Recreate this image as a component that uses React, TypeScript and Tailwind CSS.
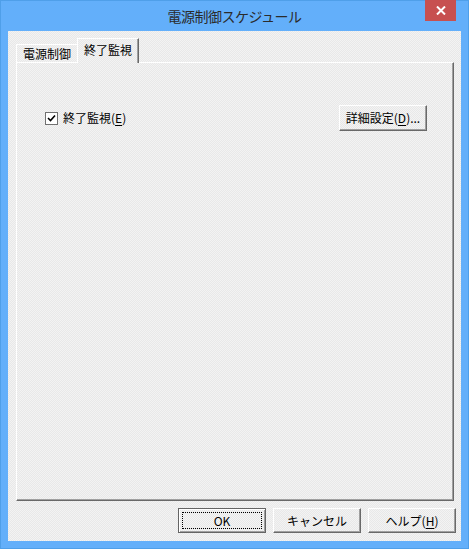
import type { ReactNode } from "react";

const uiFont = "font-['Meiryo_UI','Noto_Sans_CJK_JP',sans-serif]";
const checker =
  "bg-[repeating-conic-gradient(#f3f3f3_0_25%,#e8e8e8_0_50%)] bg-[length:2px_2px]";

const Mnemonic = ({ children }: { children: ReactNode }) => <span className="underline underline-offset-2">{children}</span>;

const PushButton = ({
  children,
  isDefault = false,
  className = "",
}: {
  children: ReactNode;
  isDefault?: boolean;
  className?: string;
}) => (
  <button
    className={`flex items-center justify-center border text-[12px] leading-none text-black ${
      isDefault
        ? "border-[#646464] shadow-[inset_1px_1px_0_#ffffff,inset_-1px_-1px_0_#a0a0a0]"
        : "border-t-white border-l-white border-r-[#696969] border-b-[#696969] shadow-[inset_-1px_-1px_0_#a0a0a0]"
    } ${checker} ${className}`}
    type="button"
  >
    {isDefault ? (
      <span className="flex h-full w-full items-center justify-center p-[3px]">
        <span className="flex h-full w-full items-center justify-center border border-dotted border-black">{children}</span>
      </span>
    ) : (
      children
    )}
  </button>
);

export default function App() {
  return (
    <div className={`flex h-[549px] w-[469px] flex-col border border-[#4f9fe9] bg-[#63affa] px-[7px] pb-[7px] ${uiFont}`}>
      <div className="relative flex h-[30px] shrink-0 items-center justify-center">
        <span className="text-[14px] tracking-[-0.5px] text-[#2b2b2b]">電源制御スケジュール</span>
        <button
          className="absolute right-[5px] top-[-1px] flex h-[21px] w-[31px] items-center justify-center bg-[#c75050]"
          type="button"
        >
          <svg height="9" viewBox="0 0 10 9" width="10">
            <path d="M1 0.5L9 8.5M9 0.5L1 8.5" stroke="#ffffff" strokeWidth="2" />
          </svg>
        </button>
      </div>

      <div className={`flex flex-1 flex-col pl-[8px] pr-[5px] pt-[6px] pb-[8px] ${checker}`}>
        <div className="flex h-[25px] shrink-0 items-end pr-[2px]">
          <div className="mb-[-1px] flex h-[19px] w-[61px] items-center justify-center border-l border-t border-l-white border-t-white text-[12px] text-black">
            電源制御
          </div>
          <div className={`relative z-10 mb-[-1px] flex h-[25px] w-[62px] items-center justify-center border-l border-r border-t border-l-white border-r-[#696969] border-t-white pb-[2px] text-[12px] text-black shadow-[inset_-1px_0_0_#a0a0a0] ${checker}`}>
            終了監視
          </div>
        </div>

        <div className="mr-[2px] flex flex-1 flex-col border border-l-white border-t-white border-r-[#696969] border-b-[#696969] shadow-[inset_-1px_-1px_0_#a0a0a0]">
          <div className="flex items-center justify-between pl-[28px] pr-[26px] pt-[42px]">
            <label className="flex items-center gap-[5px] text-[12px] text-black">
              <span className="flex h-[13px] w-[13px] items-center justify-center border border-[#707070] bg-white">
                <svg height="9" viewBox="0 0 9 9" width="9">
                  <path d="M1 4L3.5 6.5L8 1.5" fill="none" stroke="#000000" strokeWidth="1.6" />
                </svg>
              </span>
              <span>
                終了監視(<Mnemonic>E</Mnemonic>)
              </span>
            </label>
            <PushButton className="h-[26px] w-[88px]">
              <span>
                詳細設定(<Mnemonic>D</Mnemonic>)...
              </span>
            </PushButton>
          </div>
        </div>

        <div className="mt-[7px] flex shrink-0 justify-end gap-[7px]">
          <PushButton className="h-[25px] w-[88px]" isDefault>
            OK
          </PushButton>
          <PushButton className="h-[25px] w-[88px]">キャンセル</PushButton>
          <PushButton className="h-[25px] w-[88px]">
            <span>
              ヘルプ(<Mnemonic>H</Mnemonic>)
            </span>
          </PushButton>
        </div>
      </div>
    </div>
  );
}
